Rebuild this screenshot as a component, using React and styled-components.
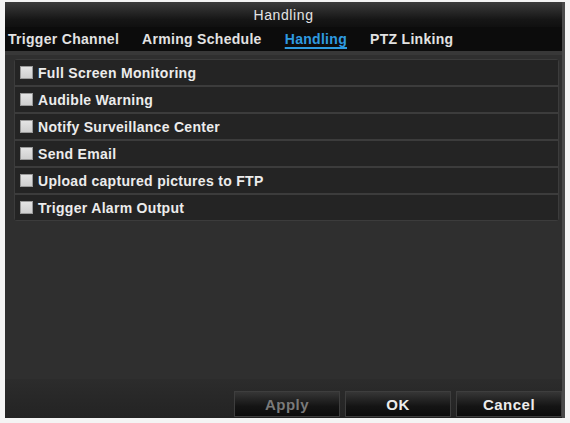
import React from 'react';
import styled, { createGlobalStyle } from 'styled-components';

const GlobalStyle = createGlobalStyle`
  html, body {
    margin: 0;
    padding: 0;
    background: #f4f4f4;
  }
  body {
    font-family: "Liberation Sans", Arial, sans-serif;
  }
`;

const Page = styled.div`
  width: 570px;
  height: 423px;
  padding: 2px 5px 5px 5px;
  box-sizing: border-box;
`;

const Window = styled.div`
  width: 560px;
  height: 416px;
  display: flex;
  flex-direction: column;
  background: #2f2f2f;
  border-right: 3px solid #4a4a4a;
  box-sizing: border-box;
`;

const TitleBar = styled.div`
  height: 25px;
  display: flex;
  align-items: center;
  justify-content: center;
  background: linear-gradient(#3c3c3c, #161616 70%, #101010);
  color: #e4e4e4;
  font-size: 14px;
  letter-spacing: 0.6px;
`;

const TabBar = styled.div`
  height: 24px;
  display: flex;
  align-items: center;
  gap: 23px;
  padding-left: 3px;
  background: #0c0c0c;
  border-bottom: 4px solid #383838;
`;

const Tab = styled.div`
  font-size: 14px;
  font-weight: bold;
  letter-spacing: 0.3px;
  color: ${(p) => (p.$active ? '#2f9be0' : '#e2e2e2')};
  text-decoration: ${(p) => (p.$active ? 'underline' : 'none')};
  text-underline-offset: 3px;
  text-decoration-thickness: 2px;
`;

const Body = styled.div`
  flex: 1;
  display: flex;
  flex-direction: column;
  padding: 4px 3px 0 9px;
`;

const List = styled.div`
  display: flex;
  flex-direction: column;
  border: 1px solid #3c3c3c;
  border-radius: 3px;
  background: #3c3c3c;
  gap: 2px;
`;

const Row = styled.div`
  height: 25px;
  display: flex;
  align-items: center;
  gap: 5px;
  padding-left: 5px;
  background: #242424;
`;

const Check = styled.span`
  width: 13px;
  height: 13px;
  background: linear-gradient(#e4e4e4, #cfcfcf);
  border: 1px solid #9a9a9a;
  box-sizing: border-box;
`;

const Label = styled.span`
  font-size: 14px;
  font-weight: bold;
  letter-spacing: 0.3px;
  color: #ececec;
`;

const Footer = styled.div`
  margin: auto -3px 0 -9px;
  height: 38px;
  display: flex;
  align-items: flex-end;
  justify-content: flex-end;
  gap: 5px;
  padding-bottom: 1px;
  background: linear-gradient(#2c2c2c, #232323);
`;

const Button = styled.div`
  width: 106px;
  height: 26px;
  display: flex;
  align-items: center;
  justify-content: center;
  background: linear-gradient(#363636, #141414 60%, #0c0c0c);
  border: 1px solid #3e3e3e;
  box-sizing: border-box;
  font-size: 15px;
  font-weight: bold;
  letter-spacing: 0.5px;
  color: ${(p) => (p.$disabled ? '#7a7a7a' : '#ececec')};
`;

const tabs = ['Trigger Channel', 'Arming Schedule', 'Handling', 'PTZ Linking'];
const options = [
  'Full Screen Monitoring',
  'Audible Warning',
  'Notify Surveillance Center',
  'Send Email',
  'Upload captured pictures to FTP',
  'Trigger Alarm Output',
];

export default function App() {
  return (
    <>
      <GlobalStyle />
      <Page>
        <Window>
          <TitleBar>Handling</TitleBar>
          <TabBar>
            {tabs.map((t) => (
              <Tab key={t} $active={t === 'Handling'}>{t}</Tab>
            ))}
          </TabBar>
          <Body>
            <List>
              {options.map((o) => (
                <Row key={o}>
                  <Check />
                  <Label>{o}</Label>
                </Row>
              ))}
            </List>
            <Footer>
              <Button $disabled>Apply</Button>
              <Button>OK</Button>
              <Button>Cancel</Button>
            </Footer>
          </Body>
        </Window>
      </Page>
    </>
  );
}
